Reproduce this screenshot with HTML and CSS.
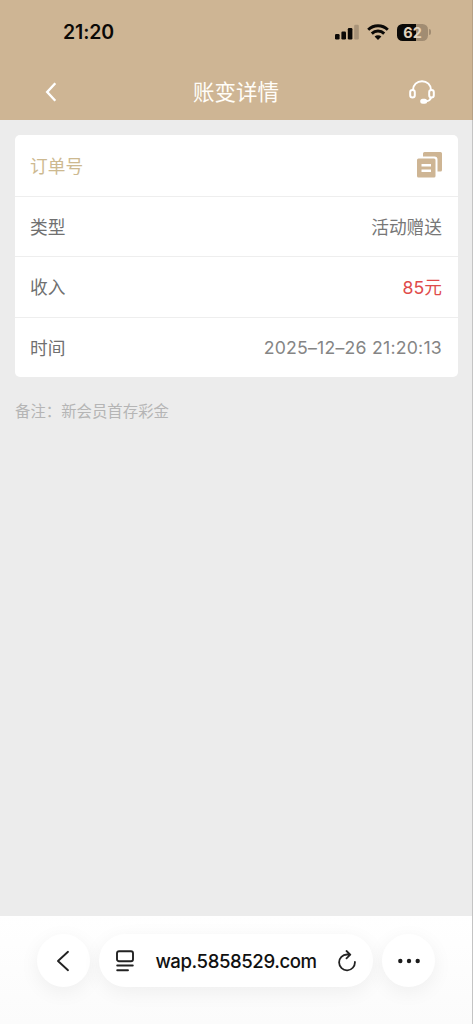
FILE: index.html
```html
<!DOCTYPE html>
<html lang="zh-CN">
<head>
<meta charset="utf-8">
<meta name="viewport" content="width=device-width, initial-scale=1">
<title>账变详情</title>
<link rel="stylesheet" href="styles.css">
</head>
<body>
<div class="screen">
  <header class="header">
    <div class="status">
      <span class="clock">21:20</span>
      <div class="status-icons">
        <svg class="signal" width="25" height="16" viewBox="0 0 25 16"><rect x="1" y="10" width="4.600" height="5.500" rx="1.200"/><rect x="7.400" y="7.500" width="4.600" height="8" rx="1.200"/><rect x="13.800" y="4" width="4.600" height="11.500" rx="1.200"/><rect x="20.200" y="0.800" width="4.600" height="14.700" rx="1.200" fill="#a89379"/></svg>
        <svg class="wifi" width="22" height="16" viewBox="0 0 22 16" fill="none" stroke="#0b0907" stroke-width="2.900"><path d="M1.200 5.700a14 14 0 0 1 19.600 0"/><path d="M4.800 9.600a8.800 8.800 0 0 1 12.400 0"/><path d="M11 16 7.600 12.600a4.900 4.900 0 0 1 6.800 0Z" fill="#0b0907" stroke="none"/></svg>
        <div class="battery"><span>62</span><i></i></div>
      </div>
    </div>
    <nav class="navbar">
      <svg class="nav-back" width="12" height="20" viewBox="0 0 12 20" fill="none" stroke="#fff" stroke-width="2.400"><path d="M10.300 1.200 2.200 10l8.100 8.800"/></svg>
      <h1 class="title">账变详情</h1>
      <svg class="service" width="26" height="24" viewBox="0 0 26 24" fill="none" stroke="#fff" stroke-width="2" stroke-linecap="round"><path d="M4 10C4 4.800 8 1.200 13 1.200S22 4.800 22 10"/><rect x="1.200" y="10" width="4.600" height="7.600" rx="2.300"/><rect x="20.200" y="10" width="4.600" height="7.600" rx="2.300"/><path d="M22 17.800c-.7 2.200-2.500 3.400-5 3.500"/><rect x="12.200" y="19.800" width="5" height="3" rx="1.500" fill="#fff"/></svg>
    </nav>
  </header>
  <main class="content">
    <section class="card">
      <div class="row"><span class="label accent">订单号</span><svg class="copy" width="26" height="26" viewBox="0 0 26 26" fill="#ceb594"><path d="M8.500 0H24.500q1.500 0 1.500 1.500V18q0 1.500-1.500 1.500h-3V7.500q0-3-3-3H7V1.500q0-1.500 1.500-1.500Z"/><path fill-rule="evenodd" d="M2.500 6.500h15.500q1.500 0 1.500 1.500v16q0 1.500-1.500 1.500H2.500q-1.500 0-1.500-1.500v-16q0-1.500 1.500-1.500ZM5.500 12v2.400h9.500V12ZM5.500 17.500v2.400h9.500v-2.400Z"/></svg></div>
      <div class="row"><span class="label">类型</span><span class="value">活动赠送</span></div>
      <div class="row"><span class="label">收入</span><span class="value income">85元</span></div>
      <div class="row"><span class="label">时间</span><span class="value date">2025–12–26 21:20:13</span></div>
    </section>
    <p class="remark">备注：新会员首存彩金</p>
  </main>
  <footer class="browser">
    <div class="round"><svg class="browser-back" width="14" height="22" viewBox="0 0 14 22" fill="none" stroke="#222" stroke-width="1.900" stroke-linecap="round" stroke-linejoin="round"><path d="M12 1.800 2 11l10 9.200"/></svg></div>
    <div class="address">
      <svg class="page" width="18" height="22" viewBox="0 0 18 22" fill="none" stroke="#222" stroke-width="1.900" stroke-linecap="round"><rect x="1" y="1.200" width="16" height="10" rx="2"/><path d="M1.200 15.500h15.600M1.200 20.200H12"/></svg>
      <span class="url">wap.5858529.com</span>
      <svg class="reload" width="18" height="22" viewBox="0 0 18 22" fill="none" stroke="#222" stroke-width="1.800" stroke-linecap="round" stroke-linejoin="round"><path d="M12 4.500H9A7.900 7.900 0 1 0 16.900 12M8.500 1l3.800 3.600-3.800 3.700"/></svg>
    </div>
    <div class="round"><svg width="22" height="6" viewBox="0 0 22 6" fill="#1b1b1b"><circle cx="2.300" cy="3" r="2.200"/><circle cx="11" cy="3" r="2.200"/><circle cx="19.700" cy="3" r="2.200"/></svg></div>
  </footer>
</div>
</body>
</html>
```
FILE: styles.css
```css
* { box-sizing: border-box; }
body { margin: 0; font-family: Inter, "Noto Sans CJK SC", sans-serif; }
svg { display: block; flex: none; }
.screen { width: 473px; height: 1024px; display: flex; flex-direction: column; background: #ececec; overflow: hidden; }
.header { height: 120px; background: #ceb594; border-right: 1px solid #b5a085; }
.status { height: 64px; display: flex; justify-content: space-between; padding: 0 41px 0 63px; align-items: center; }
.clock { font-size: 19.5px; font-weight: 600; color: #0b0907; letter-spacing: -.1px; }
.status-icons { display: flex; align-items: center; gap: 8px; }
.signal { fill: #0b0907; }
.battery { width: 34px; display: flex; align-items: center; gap: 1px; }
.battery span { width: 31px; height: 17px; border-radius: 5.5px; background: linear-gradient(90deg, #0b0907 62%, #a18c72 62%); color: #e3d3bd; font-size: 14.5px; line-height: 17px; font-weight: 700; text-align: center; }
.battery i { width: 2px; height: 6px; border-radius: 0 2px 2px 0; background: #a18c72; }
.navbar { height: 56px; display: grid; grid-template-columns: 38px 1fr 38px; align-items: center; padding: 0 37px; }
.nav-back { margin-left: 8px; }
.service { justify-self: end; }
.title { margin: 0; text-align: center; font-size: 21.5px; line-height: 30px; font-weight: 400; color: #fffdf8; }
.content { flex: 1; padding: 15px 14px 0 15px; border-right: 1px solid #c4c4c4; }
.card { height: 242px; border-radius: 5px; background: #fff; display: grid; grid-template-rows: 62px 60px 61px 59px; }
.row { display: flex; align-items: center; justify-content: space-between; padding: 0 16px 2px 15px; border-bottom: 1px solid #eee; font-size: 17.7px; color: #777; }
.row:last-child { border-bottom: 0; padding-bottom: 1px; }
.copy { margin-top: 1px; }
.label { color: #707070; }
.label.accent { color: #cdb990; }
.value.income { color: #df4b4b; }
.value.date { color: #858585; letter-spacing: .22px; }
.remark { margin: 24px 0 0; font-size: 15.4px; line-height: 22px; color: #b5b5b5; }
.browser { height: 108px; display: flex; align-items: flex-start; gap: 9px; padding: 18px 37px 0 37px; background: linear-gradient(#fff, #fbfbfb); border-right: 1px solid #c4c4c4; }
.round, .address { height: 53px; background: #fff; box-shadow: 0 5px 20px rgba(0,0,0,.06); display: flex; align-items: center; }
.round { width: 53px; border-radius: 50%; justify-content: center; flex: none; }
.browser-back { margin-right: 2px; }
.address { flex: 1; border-radius: 27px; padding: 0 17px; justify-content: space-between; }
.url { font-size: 18.6px; letter-spacing: -.42px; font-weight: 500; color: #111; white-space: nowrap; }
```
